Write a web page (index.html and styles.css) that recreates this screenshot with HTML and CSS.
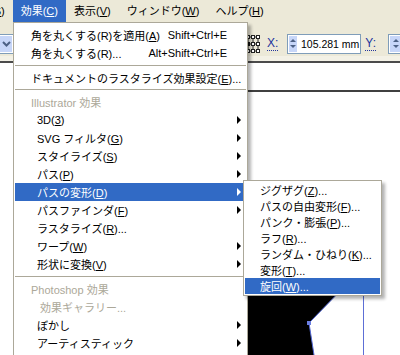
FILE: index.html
```html
<!DOCTYPE html>
<html lang="ja">
<head>
    <meta charset="UTF-8">
    <meta name="viewport" content="width=device-width, initial-scale=1.0">
    <title>効果メニュー</title>
    <link rel="stylesheet" href="styles.css">
</head>
<body>
    <div class="screen">
        <div class="menubar">
            <div class="menubar_track">
                <span class="mb_item">選択(<u>S</u>)</span>
                <span class="mb_item active">効果(<u>C</u>)</span>
                <span class="mb_item">表示(<u>V</u>)</span>
                <span class="mb_item">ウィンドウ(<u>W</u>)</span>
                <span class="mb_item">ヘルプ(<u>H</u>)</span>
            </div>
        </div>

        <div class="toolbar">
            <div class="combo">
                <span class="combo_btn">
                    <svg width="9" height="6" viewBox="0 0 9 6"><path d="M1 1 L4.5 4.5 L8 1" fill="none" stroke="#4d6185" stroke-width="2"/></svg>
                </span>
            </div>
            <div class="tb_group">
                <svg class="refpoint" width="14" height="18" viewBox="0 0 14 18">
                    <path d="M2 2 H12 M2 9 H12 M2 16 H12 M2 2 V16 M7 2 V16 M12 2 V16" stroke="#222" stroke-width="1"/>
                    <rect x="0.5" y="0.5" width="3" height="3" fill="#fff" stroke="#222"/>
                    <rect x="5.5" y="0.5" width="3" height="3" fill="#fff" stroke="#222"/>
                    <rect x="10.5" y="0.5" width="3" height="3" fill="#fff" stroke="#222"/>
                    <rect x="0.5" y="7.5" width="3" height="3" fill="#111" stroke="#111"/>
                    <rect x="5.5" y="7.5" width="3" height="3" fill="#fff" stroke="#222"/>
                    <rect x="10.5" y="7.5" width="3" height="3" fill="#fff" stroke="#222"/>
                    <rect x="0.5" y="14.5" width="3" height="3" fill="#fff" stroke="#222"/>
                    <rect x="5.5" y="14.5" width="3" height="3" fill="#fff" stroke="#222"/>
                    <rect x="10.5" y="14.5" width="3" height="3" fill="#fff" stroke="#222"/>
                </svg>
                <span class="coord_label">X:</span>
                <div class="spin">
                    <span class="spin_btn"><i class="up"></i><i class="down"></i></span>
                    <span class="spin_value">105.281 mm</span>
                </div>
                <span class="coord_label">Y:</span>
                <div class="spin">
                    <span class="spin_btn"><i class="up"></i><i class="down"></i></span>
                    <span class="spin_value"></span>
                </div>
            </div>
        </div>
        <div class="toolbar_foot"></div>

        <div class="canvas">
            <svg width="400" height="292" viewBox="0 0 400 292">
                <line x1="240" y1="28" x2="400" y2="28" stroke="#000" stroke-width="1.5"/>
                <line x1="363.5" y1="120" x2="363.5" y2="292" stroke="#5d6fd6" stroke-width="1"/>
                <polygon points="240,220 348,220 309,260 314,292 240,292" fill="#000"/>
                <polyline points="348,220 309,260 314,292" fill="none" stroke="#5267d4" stroke-width="1"/>
                <rect x="307" y="258" width="4" height="4" fill="#6a7de0"/>
            </svg>
        </div>

        <div class="menu main_menu">
            <div class="item"><span class="label">角を丸くする(R)を適用(<u>A</u>)</span><span class="key">Shift+Ctrl+E</span></div>
            <div class="item"><span class="label">角を丸くする(R)...</span><span class="key">Alt+Shift+Ctrl+E</span></div>
            <div class="sep"></div>
            <div class="item"><span class="label">ドキュメントのラスタライズ効果設定(<u>E</u>)...</span></div>
            <div class="sep sep_tight"></div>
            <div class="item header"><span class="label">Illustrator 効果</span></div>
            <div class="item sub"><span class="label">3D(<u>3</u>)</span><span class="arrow"></span></div>
            <div class="item sub"><span class="label">SVG フィルタ(<u>G</u>)</span><span class="arrow"></span></div>
            <div class="item sub"><span class="label">スタイライズ(<u>S</u>)</span><span class="arrow"></span></div>
            <div class="item sub"><span class="label">パス(<u>P</u>)</span><span class="arrow"></span></div>
            <div class="item sub selected"><span class="label">パスの変形(<u>D</u>)</span><span class="arrow"></span></div>
            <div class="item sub"><span class="label">パスファインダ(<u>F</u>)</span><span class="arrow"></span></div>
            <div class="item sub"><span class="label">ラスタライズ(<u>R</u>)...</span></div>
            <div class="item sub"><span class="label">ワープ(<u>W</u>)</span><span class="arrow"></span></div>
            <div class="item sub"><span class="label">形状に変換(<u>V</u>)</span><span class="arrow"></span></div>
            <div class="sep"></div>
            <div class="item header"><span class="label">Photoshop 効果</span></div>
            <div class="item sub deep disabled"><span class="label">効果ギャラリー...</span></div>
            <div class="item sub"><span class="label">ぼかし</span><span class="arrow"></span></div>
            <div class="item sub"><span class="label">アーティスティック</span><span class="arrow"></span></div>
        </div>

        <div class="menu submenu">
            <div class="item"><span class="label">ジグザグ(<u>Z</u>)...</span></div>
            <div class="item"><span class="label">パスの自由変形(<u>F</u>)...</span></div>
            <div class="item"><span class="label">パンク・膨張(<u>P</u>)...</span></div>
            <div class="item"><span class="label">ラフ(<u>R</u>)...</span></div>
            <div class="item"><span class="label">ランダム・ひねり(<u>K</u>)...</span></div>
            <div class="item"><span class="label">変形(<u>T</u>)...</span></div>
            <div class="item selected"><span class="label">旋回(<u>W</u>)...</span></div>
        </div>
    </div>
</body>
</html>
```

FILE: styles.css
```css
* {
    box-sizing: border-box;
}
body {
    margin: 0;
    font-family: "Liberation Sans", "Noto Sans CJK JP", sans-serif;
    font-size: 11px;
    color: #000;
}
u {
    text-decoration: underline;
    text-underline-offset: 1px;
}

.screen {
    position: relative;
    width: 400px;
    height: 355px;
    overflow: hidden;
    background-color: #fff;
}

/* menu bar */
.menubar {
    height: 22px;
    background-color: #ece9d8;
    overflow: hidden;
    white-space: nowrap;
}
.menubar_track {
    display: flex;
    margin-left: -40px;
}
.mb_item {
    padding: 0 8px;
    line-height: 22px;
    height: 22px;
}
.mb_item.active {
    background-color: #316ac5;
    color: #fff;
}

/* toolbar */
.toolbar {
    height: 34px;
    background-color: #ece9d8;
    display: flex;
    align-items: center;
    padding-top: 9px;
    white-space: nowrap;
    overflow: hidden;
}
.toolbar_foot {
    height: 7px;
    background-color: #f3f1e6;
    border-bottom: 2px solid #4b4b4b;
}
.combo {
    flex: none;
    width: 30px;
    height: 20px;
    margin-left: -16px;
    background-color: #fff;
    border: 1px solid #7f9db9;
    display: flex;
    justify-content: flex-end;
    padding: 1px;
}
.combo_btn {
    width: 12px;
    background-color: #c7d6f8;
    display: flex;
    align-items: center;
    justify-content: center;
}
.tb_group {
    flex: none;
    display: flex;
    align-items: center;
    margin-left: 232px;
}
.refpoint {
    margin-right: 7px;
}
.coord_label {
    color: #22349c;
    font-size: 12px;
    line-height: 13px;
    border-bottom: 1px dotted #22349c;
    margin-right: 9px;
}
.spin {
    width: 74px;
    height: 20px;
    border: 1px solid #7f9db9;
    background-color: #fff;
    display: flex;
    margin-right: 4px;
    padding: 1px;
}
.spin + .coord_label {
    margin-right: 12px;
}
.spin_btn {
    width: 12px;
    background-color: #c7d6f8;
    display: flex;
    flex-direction: column;
    align-items: center;
    justify-content: center;
    gap: 3px;
}
.spin_btn i {
    width: 0;
    height: 0;
    border-left: 3px solid transparent;
    border-right: 3px solid transparent;
}
.spin_btn .up {
    border-bottom: 3px solid #4d6185;
}
.spin_btn .down {
    border-top: 3px solid #4d6185;
}
.spin_value {
    padding-left: 4px;
    font-size: 10.5px;
    line-height: 16px;
}

.canvas {
    height: 292px;
}
.canvas svg {
    display: block;
}

/* dropdown menus */
.menu {
    position: absolute;
    background-color: #fff;
    border: 1px solid #aca899;
    box-shadow: 3px 3px 3px rgba(0, 0, 0, 0.3);
    white-space: nowrap;
}
.main_menu {
    left: 13px;
    top: 22px;
    width: 235px;
    height: 360px;
    padding-top: 3px;
}
.submenu {
    left: 243px;
    top: 180px;
    width: 139px;
    padding: 1px 0;
}
.item {
    display: flex;
    align-items: center;
    height: 18px;
    margin: 0 1px;
    padding-left: 16px;
}
.submenu .item {
    height: 16px;
    padding-left: 15px;
}
.item .label {
    flex: 1;
}
.item.sub {
    padding-left: 22px;
}
.item.deep {
    padding-left: 25px;
}
.item.header,
.item.disabled {
    color: #aca899;
}
.item.selected {
    background-color: #316ac5;
    color: #fff;
}
.key {
    padding-right: 19px;
}
.arrow {
    width: 0;
    height: 0;
    margin-right: 5px;
    border-left: 4px solid #000;
    border-top: 4px solid transparent;
    border-bottom: 4px solid transparent;
}
.selected .arrow {
    border-left-color: #fff;
}
.sep {
    height: 1px;
    margin: 3px 1px 3px;
    background-color: #aca899;
}
.sep.sep_tight {
    margin: 2px 1px 3px;
}
```
